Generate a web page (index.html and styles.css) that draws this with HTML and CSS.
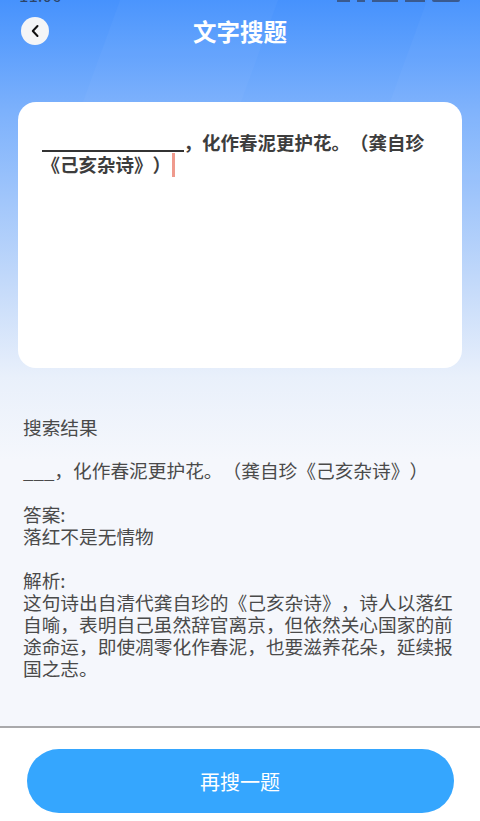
FILE: index.html
```html
<!DOCTYPE html>
<html lang="zh-CN">
<head>
    <meta charset="UTF-8">
    <meta name="viewport" content="width=device-width, initial-scale=1.0">
    <title>文字搜题</title>
    <link rel="stylesheet" href="styles.css">
</head>
<body>

<div class="page">
    <div class="hero">
        <span class="stripe stripe-a"></span>
        <span class="stripe stripe-b"></span>
    </div>

    <div class="statusbar">
        <span class="clock">11:06</span>
        <span class="status-icons">
            <span class="bit bit-bell"></span>
            <span class="bit bit-wifi"></span>
            <span class="bit bit-signal"></span>
            <span class="bit bit-signal2"></span>
            <span class="bit bit-battery"></span>
        </span>
    </div>

    <header class="topbar">
        <button class="back" type="button" aria-label="返回">
            <svg width="10" height="14" viewBox="0 0 10 14"><path d="M7.5 2 L2.8 7 L7.5 12" fill="none" stroke="#111" stroke-width="2" stroke-linecap="round" stroke-linejoin="round"/></svg>
        </button>
        <h1>文字搜题</h1>
    </header>

    <section class="card">
        <p class="question"><span class="blank"></span>，化作春泥更护花。（龚自珍《己亥杂诗》）<span class="caret"></span></p>
    </section>

    <main class="results">
        <p class="heading">搜索结果</p>
        <p class="stem">___，化作春泥更护花。（龚自珍《己亥杂诗》）</p>
        <p class="block">答案:
落红不是无情物</p>
        <p class="block">解析:
这句诗出自清代龚自珍的《己亥杂诗》，诗人以落红自喻，表明自己虽然辞官离京，但依然关心国家的前途命运，即使凋零化作春泥，也要滋养花朵，延续报国之志。</p>
    </main>

    <footer class="footer">
        <button class="again" type="button">再搜一题</button>
    </footer>
</div>

</body>
</html>
```

FILE: styles.css
```css
* {
    box-sizing: border-box;
}
body {
    margin: 0;
    font-family: "Noto Sans CJK SC", "Noto Sans", sans-serif;
    text-spacing-trim: space-all;
    background-color: #f5f7fc;
}
p {
    margin: 0;
}
.page {
    position: relative;
    display: flex;
    flex-direction: column;
    width: 480px;
    height: 821px;
    overflow: hidden;
    background-color: #f5f7fc;
}
.hero {
    position: absolute;
    top: 0;
    left: 0;
    width: 100%;
    height: 460px;
    overflow: hidden;
    background: linear-gradient(180deg, #4692fd 0%, #7cb1fc 24%, #c4dafa 62%, #e9f0fb 82%, #f5f7fc 100%);
}
.stripe {
    position: absolute;
    top: -20px;
    height: 200px;
    background-color: rgba(255, 255, 255, 0.03);
    transform: skewX(-20deg);
}
.stripe-a {
    left: 91px;
    width: 158px;
}
.stripe-b {
    left: 398px;
    width: 140px;
}
.statusbar {
    position: relative;
    display: flex;
    justify-content: space-between;
    height: 3px;
    padding: 0 20px 0 19px;
    overflow: hidden;
}
.clock {
    margin-top: -13px;
    font-size: 17px;
    line-height: 16px;
    color: #2c4468;
}
.status-icons {
    display: flex;
    gap: 7px;
}
.bit {
    height: 2px;
    background-color: #3a5a8e;
}
.bit-bell {
    width: 13px;
}
.bit-wifi {
    width: 8px;
}
.bit-signal {
    width: 26px;
}
.bit-signal2 {
    width: 20px;
}
.bit-battery {
    width: 28px;
    border-radius: 0 0 4px 4px;
}
.topbar {
    position: relative;
    display: flex;
    justify-content: center;
    align-items: center;
    height: 56px;
}
.topbar h1 {
    margin: 0;
    font-size: 23.5px;
    font-weight: 700;
    line-height: 56px;
    color: #fff;
}
.back {
    position: absolute;
    top: 14px;
    left: 21px;
    display: flex;
    justify-content: center;
    align-items: center;
    width: 28px;
    height: 28px;
    padding: 0;
    border: none;
    border-radius: 50%;
    background-color: #f4f5f7;
}
.card {
    position: relative;
    width: 444px;
    height: 266px;
    margin: 43px 18px 0;
    padding: 29px 23px 29px 23.5px;
    border-radius: 18px;
    background-color: #fff;
}
.question {
    font-size: 18.5px;
    font-weight: 700;
    line-height: 22px;
    color: #3d3d3d;
}
.blank {
    display: inline-block;
    width: 142px;
    vertical-align: -2px;
    border-bottom: 2px solid #333;
}
.caret {
    display: inline-block;
    width: 3px;
    height: 24px;
    margin-left: 1px;
    vertical-align: -5px;
    background-color: #ef9a8d;
}
.results {
    position: relative;
    flex: 1;
    padding: 48px 23px 0;
    font-size: 18.7px;
    line-height: 22px;
    color: #4a4a4a;
}
.heading {
    margin-bottom: 21px;
}
.stem {
    margin-bottom: 22px;
}
.block {
    margin-bottom: 22px;
    white-space: pre-line;
}
.footer {
    position: relative;
    display: flex;
    justify-content: center;
    align-items: flex-start;
    height: 95px;
    padding-top: 21px;
    border-top: 2px solid #a9a9ab;
    background-color: #fff;
}
.again {
    width: 427px;
    height: 64px;
    border: none;
    border-radius: 32px;
    font-family: inherit;
    font-size: 20px;
    color: #fff;
    background-color: #35a6fe;
}
```
